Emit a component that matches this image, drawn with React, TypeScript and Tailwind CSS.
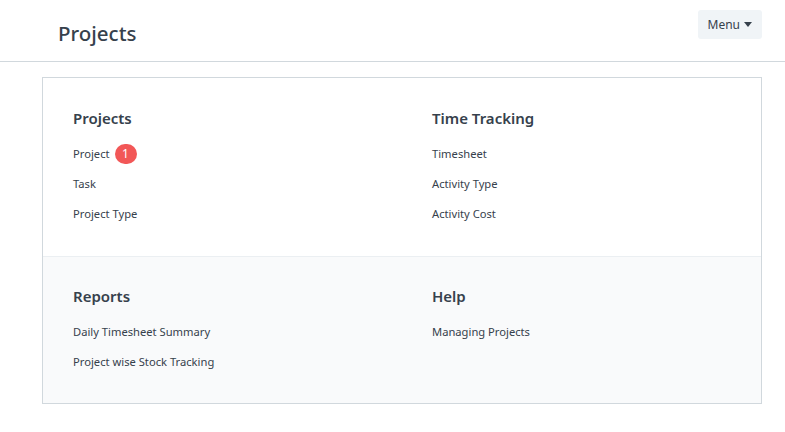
const sections = [
  {
    title: "Projects",
    links: [{ label: "Project", count: 1 }, { label: "Task" }, { label: "Project Type" }],
  },
  {
    title: "Time Tracking",
    links: [{ label: "Timesheet" }, { label: "Activity Type" }, { label: "Activity Cost" }],
  },
  {
    title: "Reports",
    links: [{ label: "Daily Timesheet Summary" }, { label: "Project wise Stock Tracking" }],
  },
  {
    title: "Help",
    links: [{ label: "Managing Projects" }],
  },
];

type Section = (typeof sections)[number];

function ModuleSection({ section }: { section: Section }) {
  return (
    <div className="pl-[30px]">
      <h4 className="text-[15px] font-semibold leading-[22px] text-[#36414c]">{section.title}</h4>
      <ul className="mt-[15px] flex flex-col gap-[10px]">
        {section.links.map((link) => (
          <li key={link.label} className="flex h-[20px] items-center gap-[5px] text-[11.2px] text-[#36414c]">
            <span>{link.label}</span>
            {"count" in link && link.count ? (
              <span className="flex h-[20px] min-w-[22px] items-center justify-center rounded-full bg-[#f25757] px-[6px] text-[12px] text-white">
                {link.count}
              </span>
            ) : null}
          </li>
        ))}
      </ul>
    </div>
  );
}

export default function App() {
  return (
    <div className="min-h-[432px] bg-white font-['Noto_Sans','Open_Sans',sans-serif] text-[#36414c]">
      <header className="flex h-[62px] items-start justify-between border-b border-[#d1d8dd] pl-[58px] pr-[23px]">
        <h1 className="mt-[18px] text-[20.5px] font-medium leading-[30px] text-[#36414c]">Projects</h1>
        <button className="mt-[10px] flex h-[29px] items-center gap-[4px] rounded-[3px] bg-[#f0f4f7] px-[10px] text-[12px] text-[#36414c]">
          Menu
          <svg width="8" height="5" viewBox="0 0 8 5">
            <path d="M0 0h8L4 5z" fill="#36414c" />
          </svg>
        </button>
      </header>
      <div className="ml-[42px] mt-[15px] w-[720px] border border-[#d1d8dd]">
        <div className="grid h-[178px] grid-cols-2 pt-[29px]">
          <ModuleSection section={sections[0]} />
          <ModuleSection section={sections[1]} />
        </div>
        <div className="grid h-[147px] grid-cols-2 border-t border-[#ebeff2] bg-[#f9fafb] pt-[28px]">
          <ModuleSection section={sections[2]} />
          <ModuleSection section={sections[3]} />
        </div>
      </div>
    </div>
  );
}
